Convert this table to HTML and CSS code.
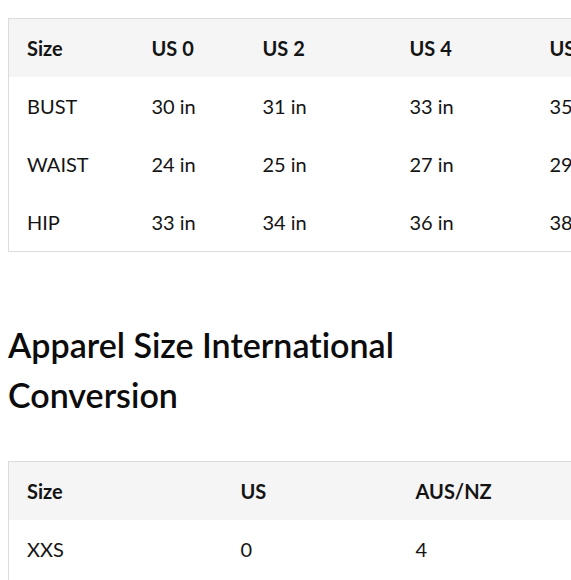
FILE: index.html
```html
<!DOCTYPE html>
<html lang="en">
<head>
<meta charset="utf-8">
<title>Size Guide</title>
<link rel="stylesheet" href="styles.css">
</head>
<body>
<div class="page">
  <div class="table-wrap">
    <table class="size-table table-measure">
      <colgroup>
        <col class="c1"><col class="c2"><col class="c3"><col class="c4"><col class="c5"><col class="c6">
      </colgroup>
      <thead>
        <tr><th>Size</th><th>US 0</th><th>US 2</th><th>US 4</th><th>US 6</th><th>US 8</th></tr>
      </thead>
      <tbody>
        <tr><td>BUST</td><td>30 in</td><td>31 in</td><td>33 in</td><td>35 in</td><td>37 in</td></tr>
        <tr><td>WAIST</td><td>24 in</td><td>25 in</td><td>27 in</td><td>29 in</td><td>31 in</td></tr>
        <tr><td>HIP</td><td>33 in</td><td>34 in</td><td>36 in</td><td>38 in</td><td>40 in</td></tr>
      </tbody>
    </table>
  </div>

  <h2 class="section-title">Apparel Size International Conversion</h2>

  <div class="table-wrap">
    <table class="size-table table-convert">
      <colgroup>
        <col class="d1"><col class="d2"><col class="d3"><col class="d4">
      </colgroup>
      <thead>
        <tr><th>Size</th><th>US</th><th>AUS/NZ</th><th>UK</th></tr>
      </thead>
      <tbody>
        <tr><td>XXS</td><td>0</td><td>4</td><td>4</td></tr>
        <tr><td>XS</td><td>2</td><td>6</td><td>6</td></tr>
      </tbody>
    </table>
  </div>
</div>
</body>
</html>
```

FILE: styles.css
```css
html, body {
  margin: 0;
  padding: 0;
  background: #ffffff;
}

body {
  font-family: "Lato", "Open Sans", sans-serif;
  color: #141414;
  overflow: hidden;
  font-variant-ligatures: none;
  font-feature-settings: "liga" 0, "dlig" 0;
}

.page {
  padding: 18px 0 0 8px;
  overflow: hidden;
}

.table-wrap {
  overflow: hidden;
}

.size-table {
  border-collapse: collapse;
  table-layout: fixed;
  border: 1px solid #dcdcdc;
  font-size: 20px;
}

.table-measure { width: 760px; }
.table-measure .c1 { width: 125px; }
.table-measure .c2 { width: 111px; }
.table-measure .c3 { width: 147px; }
.table-measure .c4 { width: 140px; }
.table-measure .c5 { width: 120px; }
.table-measure .c6 { width: 117px; }

.table-convert { width: 760px; }
.table-convert .d1 { width: 214px; }
.table-convert .d2 { width: 175px; }
.table-convert .d3 { width: 190px; }
.table-convert .d4 { width: 181px; }

.size-table th,
.size-table td {
  text-align: left;
  padding: 0 0 0 18px;
  height: 58px;
  vertical-align: middle;
  white-space: nowrap;
}

.size-table thead th {
  background: #f5f5f5;
  font-weight: 700;
}

.size-table td {
  font-weight: 400;
}

.section-title {
  margin: 68px 0 41px;
  font-size: 34px;
  line-height: 50px;
  font-weight: 600;
  width: 420px;
  color: #0c0c0c;
}
```
